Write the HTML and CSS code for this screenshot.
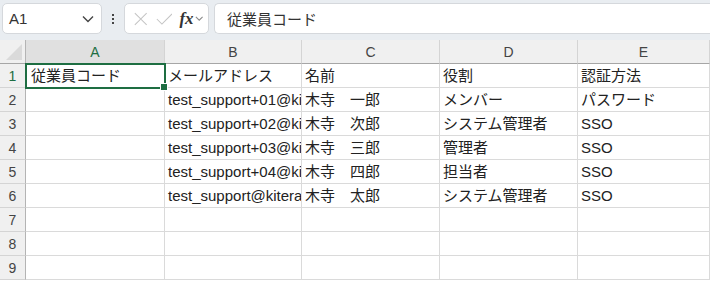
FILE: index.html
```html
<!DOCTYPE html>
<html lang="ja">
<head>
  <meta charset="UTF-8" />
  <title>Sheet1</title>
  <link rel="stylesheet" href="styles.css">
</head>
<body>
  <!-- formula bar -->
  <div class="toolbar">
    <div class="namebox">
      <span>A1</span>
      <svg class="chev" width="12" height="8" viewBox="0 0 12 8"><path d="M1 1.5 L6 6.5 L11 1.5" fill="none" stroke="#444" stroke-width="1.4"/></svg>
    </div>
    <div class="dots"><i></i><i></i><i></i></div>
    <div class="fxgroup">
      <svg width="16" height="16" viewBox="0 0 16 16"><path d="M1 1 L15 15 M15 1 L1 15" stroke="#c4c4c4" stroke-width="1.2"/></svg>
      <svg width="20" height="16" viewBox="0 0 20 16"><path d="M1 8 L7 14 L19 2" fill="none" stroke="#c4c4c4" stroke-width="1.2"/></svg>
      <span class="fx">fx</span>
      <svg width="10" height="7" viewBox="0 0 10 7"><path d="M1 1.5 L5 5.5 L9 1.5" fill="none" stroke="#888" stroke-width="1.2"/></svg>
    </div>
    <div class="formula">従業員コード</div>
  </div>

  <div class="sheet">
    <div class="corner"></div>
    <div class="colhead sel">A</div>
    <div class="colhead">B</div>
    <div class="colhead">C</div>
    <div class="colhead">D</div>
    <div class="colhead">E</div>

    <div class="rowhead sel">1</div>
    <div class="cell active">従業員コード</div>
    <div class="cell">メールアドレス</div>
    <div class="cell">名前</div>
    <div class="cell">役割</div>
    <div class="cell">認証方法</div>

    <div class="rowhead">2</div>
    <div class="cell"></div>
    <div class="cell">test_support+01@kitera.co.jp</div>
    <div class="cell">木寺　一郎</div>
    <div class="cell">メンバー</div>
    <div class="cell">パスワード</div>

    <div class="rowhead">3</div>
    <div class="cell"></div>
    <div class="cell">test_support+02@kitera.co.jp</div>
    <div class="cell">木寺　次郎</div>
    <div class="cell">システム管理者</div>
    <div class="cell">SSO</div>

    <div class="rowhead">4</div>
    <div class="cell"></div>
    <div class="cell">test_support+03@kitera.co.jp</div>
    <div class="cell">木寺　三郎</div>
    <div class="cell">管理者</div>
    <div class="cell">SSO</div>

    <div class="rowhead">5</div>
    <div class="cell"></div>
    <div class="cell">test_support+04@kitera.co.jp</div>
    <div class="cell">木寺　四郎</div>
    <div class="cell">担当者</div>
    <div class="cell">SSO</div>

    <div class="rowhead">6</div>
    <div class="cell"></div>
    <div class="cell">test_support@kitera.co.jp</div>
    <div class="cell">木寺　太郎</div>
    <div class="cell">システム管理者</div>
    <div class="cell">SSO</div>

    <div class="rowhead">7</div>
    <div class="cell"></div><div class="cell"></div><div class="cell"></div><div class="cell"></div><div class="cell"></div>

    <div class="rowhead">8</div>
    <div class="cell"></div><div class="cell"></div><div class="cell"></div><div class="cell"></div><div class="cell"></div>

    <div class="rowhead">9</div>
    <div class="cell"></div><div class="cell"></div><div class="cell"></div><div class="cell"></div><div class="cell"></div>
  </div>
</body>
</html>
```

FILE: styles.css
```css
* {
  box-sizing: border-box;
  margin: 0;
  padding: 0;
}

body {
  width: 710px;
  height: 281px;
  overflow: hidden;
  background: #ffffff;
  font-family: "Liberation Sans", "Noto Sans CJK JP", sans-serif;
  color: #222;
}

/* Formula bar */
.toolbar {
  height: 40px;
  background-color: #e9edf1;
  display: flex;
  align-items: flex-start;
  padding: 3px 0 0 2px;
}

.namebox {
  width: 100px;
  height: 31px;
  background: #fff;
  border: 1px solid #d5d8dc;
  border-radius: 5px;
  display: flex;
  align-items: center;
  justify-content: space-between;
  padding: 0 7px 0 6px;
  font-size: 15px;
  color: #333;
}

.dots {
  width: 22px;
  height: 31px;
  display: flex;
  flex-direction: column;
  align-items: center;
  justify-content: center;
  gap: 2px;
}

.dots i {
  width: 2px;
  height: 2px;
  background: #444;
}

.fxgroup {
  width: 85px;
  height: 31px;
  background: #fff;
  border: 1px solid #d5d8dc;
  border-radius: 5px;
  display: flex;
  align-items: center;
  padding: 0 5px 0 9px;
  gap: 8px;
}

.fx {
  font-family: "Liberation Serif", serif;
  font-style: italic;
  font-weight: bold;
  font-size: 17px;
  color: #333;
  margin-left: -1px;
  margin-right: -7px;
}

.formula {
  flex: 1;
  height: 31px;
  margin-left: 5px;
  background: #fff;
  border: 1px solid #d5d8dc;
  border-right: none;
  border-radius: 5px 0 0 5px;
  padding: 4px 0 0 12px;
  font-size: 15px;
  color: #333;
}

/* Grid */
.sheet {
  display: grid;
  grid-template-columns: 26px 139px 137px 138px 138px 1fr;
  grid-template-rows: 24px repeat(9, 24px);
}

.corner {
  background: #f0f0f0;
  border-right: 1px solid #b4b4b4;
  border-bottom: 1px solid #a6a6a6;
  position: relative;
}

.corner::after {
  content: "";
  position: absolute;
  right: 3px;
  bottom: 3px;
  border-left: 16px solid transparent;
  border-bottom: 16px solid #dadada;
}

.colhead {
  background: #f0f0f0;
  border-right: 1px solid #d4d4d4;
  border-bottom: 1px solid #a6a6a6;
  display: flex;
  align-items: center;
  justify-content: center;
  font-size: 14px;
  color: #444;
}

.colhead.sel {
  background: #e0e0e0;
  color: #1e6e42;
}

.rowhead {
  background: #f0f0f0;
  border-right: 1px solid #b4b4b4;
  border-bottom: 1px solid #d4d4d4;
  display: flex;
  align-items: center;
  justify-content: center;
  font-size: 14px;
  color: #444;
}

.rowhead.sel {
  color: #1e6e42;
}

.cell {
  border-right: 1px solid #dadada;
  border-bottom: 1px solid #dadada;
  padding: 2px 0 0 3px;
  font-size: 15px;
  line-height: 20px;
  white-space: nowrap;
  overflow: hidden;
  color: #222;
}

.cell.active {
  outline: 2px solid #1e6e42;
  outline-offset: -1px;
  padding-left: 5px;
  overflow: visible;
  position: relative;
}

.cell.active::after {
  content: "";
  position: absolute;
  right: -4px;
  bottom: -4px;
  width: 6px;
  height: 6px;
  background: #1e6e42;
  border: 1px solid #fff;
}
```
